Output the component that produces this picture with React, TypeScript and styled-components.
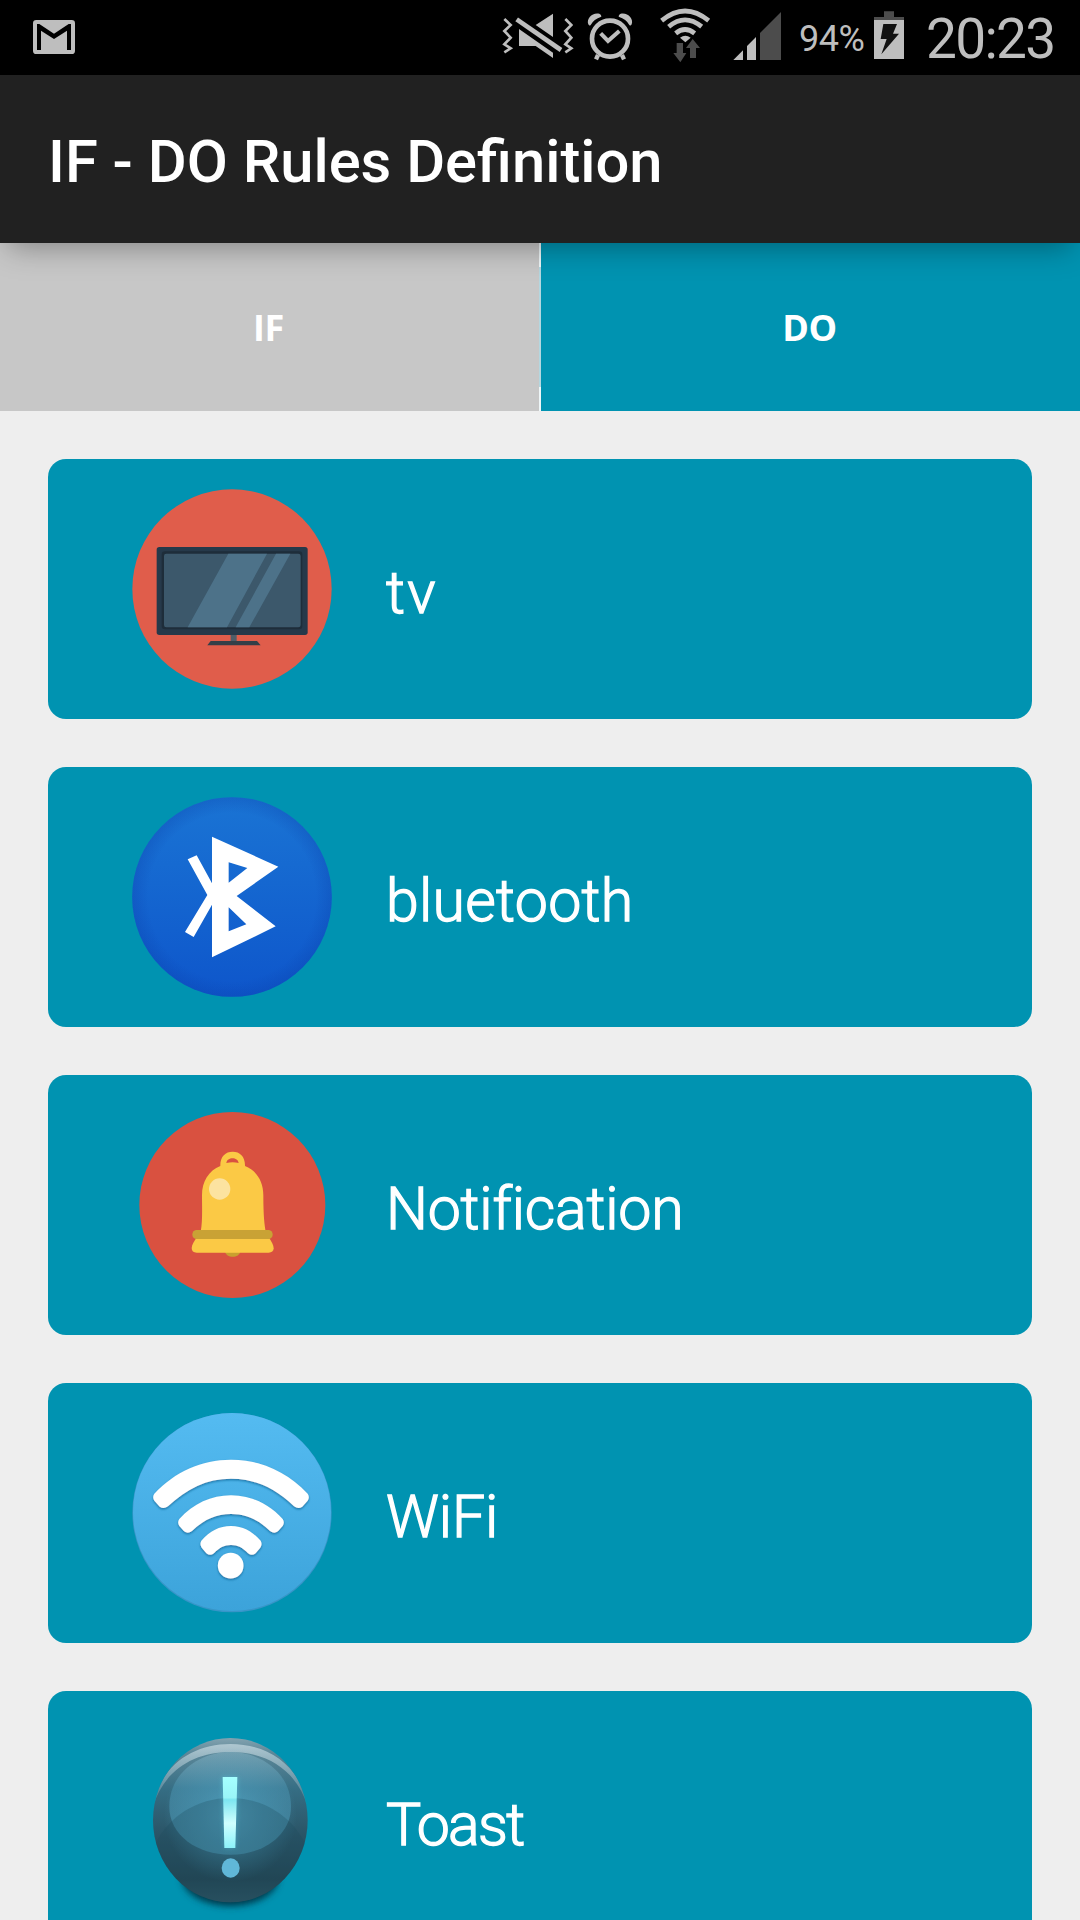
import React from "react";
import styled, { createGlobalStyle } from "styled-components";

const Global = createGlobalStyle`
  * { box-sizing: border-box; }
  html, body { margin: 0; padding: 0; background: #eeeeee; overflow: hidden; }
`;

const Screen = styled.div`
  width: 1080px;
  height: 1920px;
  display: flex;
  flex-direction: column;
  overflow: hidden;
  background: #eeeeee;
  font-family: Roboto, "Liberation Sans", sans-serif;
`;

const StatusBar = styled.div`
  flex: none;
  height: 75px;
  display: flex;
  align-items: flex-start;
  background: #000;
  color: #bebebe;
`;

const StatusIcon = styled.svg<{ $gap?: number }>`
  flex: none;
  display: block;
  height: 75px;
  margin-left: ${(p) => p.$gap ?? 0}px;
`;

const Spacer = styled.div`
  flex: 1;
`;

const Percent = styled.div`
  width: 72px;
  margin-left: 14px;
  font-size: 36px;
  line-height: 78px;
  white-space: nowrap;
  letter-spacing: -0.5px;
`;

const Clock = styled.div`
  width: 154px;
  margin-left: 19px;
  font-size: 55px;
  line-height: 79px;
  letter-spacing: -1.7px;
  white-space: nowrap;
`;

const Header = styled.header`
  flex: none;
  height: 168px;
  display: flex;
  align-items: center;
  padding: 5px 48px 0;
  background: #212121;
  position: relative;
  z-index: 1;
  box-shadow: 0 12px 28px -8px rgba(0, 0, 0, 0.34);
`;

const Title = styled.h1`
  margin: 0;
  color: #fff;
  font-size: 59.7px;
  font-weight: 500;
  line-height: 70px;
  white-space: nowrap;
`;

const Tabs = styled.nav`
  flex: none;
  height: 168px;
  display: flex;
`;

const Tab = styled.button<{ $active?: boolean }>`
  flex: 1;
  border: 0;
  padding: 0 2px 0 0;
  color: #fff;
  background: ${(p) => (p.$active ? "#0093b1" : "#c7c7c7")};
  font-family: "Open Sans", "Noto Sans", sans-serif;
  font-size: 36px;
  font-weight: 700;
  letter-spacing: -0.4px;
`;

const TabDivider = styled.div`
  flex: none;
  width: 2px;
  background: linear-gradient(#eef6f8 24px, #b4d7e0 24px, #b4d7e0 144px, #eef6f8 144px);
`;

const List = styled.main`
  display: flex;
  flex-direction: column;
  gap: 48px;
  padding: 48px 48px 0;
`;

const Card = styled.section`
  flex: none;
  height: 260px;
  display: flex;
  align-items: center;
  gap: 54px;
  padding-left: 84px;
  border-radius: 18px;
  background: #0093b1;
`;

const CardIcon = styled.svg`
  flex: none;
  width: 200px;
  height: 200px;
  display: block;
`;

const Label = styled.span<{ $spacing: number }>`
  padding-top: 7px;
  color: #fff;
  font-size: 59px;
  font-weight: 300;
  line-height: 70px;
  white-space: nowrap;
  font-variant-ligatures: none;
  -webkit-text-stroke: 1.3px #fff;
  letter-spacing: ${(p) => p.$spacing}px;
`;

function TvIcon() {
  return (
    <CardIcon viewBox="36 57 600 600">
      <circle cx="336" cy="357" r="299" fill="#e05d4b" />
      <rect x="110" y="231" width="453" height="264" rx="8" fill="#26394a" />
      <rect x="125" y="244" width="422" height="234" rx="10" fill="#1e2d3a" />
      <rect x="132" y="251" width="410" height="221" rx="7" fill="#3c586b" />
      <path d="M325 251H441L321 472H203ZM468 251H511L388 472H347Z" fill="#4d7289" />
      <path d="M332 495h18v18h-18z" fill="#4f5d68" />
      <path d="M272 513H411L422 526H262Z" fill="#343f48" />
    </CardIcon>
  );
}

function BluetoothIcon() {
  return (
    <CardIcon viewBox="36 51 600 600">
      <defs>
        <linearGradient id="btFill" x1="0" y1="0" x2="0" y2="1">
          <stop offset="0" stopColor="#1a74d4" />
          <stop offset="1" stopColor="#0e56cb" />
        </linearGradient>
        <radialGradient id="btRim">
          <stop offset="0.84" stopColor="#0a3fa8" stopOpacity="0" />
          <stop offset="1" stopColor="#0a3fa8" stopOpacity="0.28" />
        </radialGradient>
      </defs>
      <circle cx="336" cy="351" r="299.5" fill="url(#btFill)" />
      <circle cx="336" cy="351" r="299.5" fill="url(#btRim)" />
      <path
        fill="#fff"
        fillRule="evenodd"
        d="M276 170L475 260L350 348L467 439L276 532V374L221 471L195 456L262 345L203 238L230 226L276 310ZM326 247V308L382 264ZM326 382V454L379 433Z"
      />
    </CardIcon>
  );
}

function BellIcon() {
  return (
    <CardIcon viewBox="36 45 600 600">
      <circle cx="337" cy="345" r="279" fill="#d95140" />
      <path d="M315 484H361C359 506 317 506 315 484Z" fill="#c9a02f" />
      <path
        fill="#fbc945"
        fillRule="evenodd"
        d="M301 228C300 200 316 185 338 185C360 185 376 200 375 228C410 242 430 274 430 316C430 350 431 395 437 425H242C248 395 246 350 246 316C246 274 266 242 301 228ZM319 219Q338 214 356 219C354 200 321 200 319 219Z"
      />
      <path
        d="M232 440H445C455 455 461 465 461 475Q460 488 446 488H230Q215 488 215 474C215 464 223 452 232 440Z"
        fill="#fbc945"
      />
      <rect x="217" y="420" width="241" height="27" rx="13" fill="#c9a235" />
      <circle cx="299" cy="297" r="32" fill="#fce3a0" />
    </CardIcon>
  );
}

function WifiIcon() {
  return (
    <CardIcon viewBox="36 39 600 600">
      <defs>
        <linearGradient id="wifiFill" x1="0" y1="0" x2="0" y2="1">
          <stop offset="0" stopColor="#54bbf1" />
          <stop offset="1" stopColor="#3ca3da" />
        </linearGradient>
        <filter id="wifiShadow" x="-10%" y="-10%" width="120%" height="125%">
          <feDropShadow dx="0" dy="4" stdDeviation="3" floodColor="#17608f" floodOpacity="0.75" />
        </filter>
      </defs>
      <circle cx="336" cy="338" r="299" fill="#3795c8" />
      <circle cx="336" cy="336" r="297" fill="url(#wifiFill)" />
      <g filter="url(#wifiShadow)" fill="#fff">
        <path d="M103 281C165 215 245 179 333 179C421 179 501 215 563 281Q570 292 563 302L547 320Q535 329 522 319C466 266 406 236 333 236C260 236 200 266 144 319Q131 329 119 320L103 302Q96 292 103 281Z" />
        <path d="M178 357C220 311 274 286 333 286C392 286 446 311 488 357Q495 367 488 378L474 394Q462 403 450 393C417 361 379 342 333 342C287 342 249 361 216 393Q204 403 192 394L178 378Q171 367 178 357Z" />
        <path d="M244 422C270 393 298 378 333 378C368 378 396 393 422 422Q428 433 421 443L407 460Q396 469 384 460C368 443 354 435 333 435C312 435 298 443 282 460Q270 469 259 460L245 443Q238 433 244 422Z" />
        <circle cx="332" cy="497" r="38.5" />
      </g>
    </CardIcon>
  );
}

function ToastIcon() {
  return (
    <CardIcon viewBox="36 33 600 600">
      <defs>
        <linearGradient id="orb" x1="0" y1="0" x2="0" y2="1">
          <stop offset="0" stopColor="#86a5b2" />
          <stop offset="0.1" stopColor="#5c8798" />
          <stop offset="0.32" stopColor="#356d83" />
          <stop offset="0.6" stopColor="#2a5365" />
          <stop offset="0.85" stopColor="#234553" />
          <stop offset="1" stopColor="#2d5362" />
        </linearGradient>
        <radialGradient id="orbGlow" gradientUnits="userSpaceOnUse" cx="331" cy="315" r="200">
          <stop offset="0" stopColor="#61bad8" stopOpacity="1" />
          <stop offset="0.5" stopColor="#4a9cbb" stopOpacity="0.6" />
          <stop offset="1" stopColor="#4a9cbb" stopOpacity="0" />
        </radialGradient>
        <linearGradient id="gloss" x1="0" y1="0" x2="0" y2="1">
          <stop offset="0" stopColor="#85b2c3" stopOpacity="0.55" />
          <stop offset="0.35" stopColor="#4b93b0" stopOpacity="0.5" />
          <stop offset="1" stopColor="#4ea0be" stopOpacity="0.6" />
        </linearGradient>
        <linearGradient id="crescent" gradientUnits="userSpaceOnUse" x1="0" y1="100" x2="0" y2="270">
          <stop offset="0" stopColor="#b6cdd6" stopOpacity="0.9" />
          <stop offset="1" stopColor="#8fb2c0" stopOpacity="0.3" />
        </linearGradient>
        <linearGradient id="mark" x1="0" y1="0" x2="0" y2="1">
          <stop offset="0" stopColor="#a5ffff" />
          <stop offset="0.29" stopColor="#9af5f8" />
          <stop offset="0.32" stopColor="#7de6f1" />
          <stop offset="0.65" stopColor="#d0ffff" />
          <stop offset="1" stopColor="#8df3fa" />
        </linearGradient>
        <filter id="orbShadow" x="-20%" y="-20%" width="140%" height="150%">
          <feGaussianBlur stdDeviation="11" />
        </filter>
        <filter id="markGlow" x="-100%" y="-10%" width="300%" height="120%">
          <feGaussianBlur stdDeviation="8" />
        </filter>
        <clipPath id="orbClip">
          <ellipse cx="331" cy="330.5" rx="232" ry="246.5" />
        </clipPath>
      </defs>
      <ellipse cx="331" cy="500" rx="145" ry="88" fill="#02394a" filter="url(#orbShadow)" />
      <g clipPath="url(#orbClip)">
        <rect x="95" y="80" width="472" height="502" fill="url(#orb)" />
        <path
          d="M99 290C120 165 220 102 331 102C442 102 542 165 563 290C530 180 440 126 331 126C222 126 132 180 99 290Z"
          fill="url(#crescent)"
        />
        <circle cx="331" cy="315" r="200" fill="url(#orbGlow)" opacity="0.75" />
        <path
          d="M331 126C425 126 513 190 513 290C513 375 430 434 331 434C232 434 148 375 148 290C148 190 237 126 331 126Z"
          fill="url(#gloss)"
        />
        <path
          d="M105 404C145 320 230 264 331 264C432 264 517 320 557 404V590H105Z"
          fill="#1d4a5d"
          opacity="0.28"
        />
      </g>
      <path d="M306 201H354L346 414H314Z" fill="#63d8ea" opacity="0.35" filter="url(#markGlow)" />
      <path d="M308 201H352L346 414H313Z" fill="url(#mark)" />
      <ellipse cx="332" cy="474" rx="27" ry="29" fill="#60b7d8" />
    </CardIcon>
  );
}

const rules = [
  { label: "tv", Icon: TvIcon, spacing: 2.2 },
  { label: "bluetooth", Icon: BluetoothIcon, spacing: 0.3 },
  { label: "Notification", Icon: BellIcon, spacing: -0.2 },
  { label: "WiFi", Icon: WifiIcon, spacing: -0.1 },
  { label: "Toast", Icon: ToastIcon, spacing: -1.7 },
];

export default function App() {
  return (
    <>
      <Global />
      <Screen>
        <StatusBar>
          <StatusIcon $gap={30} width="48" viewBox="90 0 144 225" fill="#bebebe">
            <path
              fillRule="evenodd"
              d="M109 60H215Q225 60 225 70V152Q225 162 215 162H109Q99 162 99 152V70Q99 60 109 60ZM111 72V150H123V92L162 117L201 92V150H213V72H206L162 101L118 72Z"
            />
          </StatusIcon>
          <Spacer />
          <StatusIcon width="75" viewBox="30 0 225 225" fill="none">
            <path
              d="M43 57L62 75L43 93L62 113L43 133L62 145L43 157M226 57L244 75L226 93L244 113L226 133L244 145L226 157"
              stroke="#bebebe"
              strokeWidth="8"
            />
            <path d="M189 41V111L137 75ZM87 87L189 158V174L137 138H87Z" fill="#bebebe" />
            <path d="M80 58L213 150" stroke="#000" strokeWidth="26" />
            <path d="M80 58L213 150" stroke="#bebebe" strokeWidth="14" />
          </StatusIcon>
          <StatusIcon $gap={10} width="50" viewBox="285 0 150 225" fill="none" stroke="#bebebe">
            <circle cx="360" cy="116" r="54" strokeWidth="14" />
            <path d="M332 100L354 123L388 93" strokeWidth="12" />
            <path d="M324 165L318 178M396 165L402 178" strokeWidth="13" />
            <path
              d="M295 73C288 55 308 36 328 41Q335 44 334 50Q311 57 302 75Q298 79 295 73ZM425 73C432 55 412 36 392 41Q385 44 386 50Q409 57 418 75Q422 79 425 73Z"
              fill="#bebebe"
              stroke="none"
            />
          </StatusIcon>
          <StatusIcon $gap={22} width="55" viewBox="501 0 165 225" fill="none" stroke="#bebebe" strokeWidth="14">
            <path d="M515 62Q585 4 656 62M536 80Q585 39 635 80M557 100Q585 77 614 100" />
            <path d="M570 113Q586 101 602 113L586 127Z" fill="#bebebe" stroke="none" />
            <path
              d="M560 129H579V159H589L571 187L550 159H560ZM600 174V144H588L608 117L630 144H618V174Z"
              fill="#4c4c4c"
              stroke="none"
            />
          </StatusIcon>
          <StatusIcon $gap={18} width="55" viewBox="720 0 165 225">
            <path d="M730 180L759 151V180ZM771 138L798 111V180H771Z" fill="#bebebe" />
            <path d="M810 99L873 36V180H810Z" fill="#4c4c4c" />
          </StatusIcon>
          <Percent>94%</Percent>
          <StatusIcon width="36" viewBox="273 0 108 225">
            <path d="M312 34H342V51H372V60H282V51H312Z" fill="#4c4c4c" />
            <path d="M282 60H372V177H282Z" fill="#bebebe" />
            <path d="M310 72H351L339 101H357L304 163L320 117H302Z" fill="#111" />
          </StatusIcon>
          <Clock>20:23</Clock>
        </StatusBar>
        <Header>
          <Title>IF - DO Rules Definition</Title>
        </Header>
        <Tabs>
          <Tab>IF</Tab>
          <TabDivider />
          <Tab $active>DO</Tab>
        </Tabs>
        <List>
          {rules.map(({ label, Icon, spacing }) => (
            <Card key={label}>
              <Icon />
              <Label $spacing={spacing}>{label}</Label>
            </Card>
          ))}
        </List>
      </Screen>
    </>
  );
}
